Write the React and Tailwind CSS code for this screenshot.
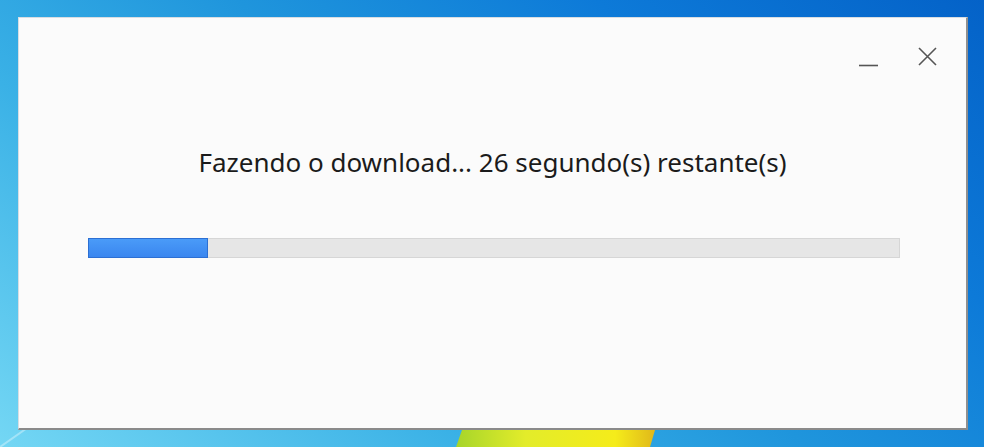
export default function App() {
  return (
    <div className="relative w-[984px] h-[447px] overflow-hidden bg-[linear-gradient(218deg,#0462c8_0%,#0d7ad8_25%,#1f95dc_48%,#3ab1e6_70%,#74d7f4_100%)] pt-[17px] pl-[18px]">
      <svg className="absolute left-0 top-0" width="984" height="447">
        <defs>
          <linearGradient id="yl" x1="0" x2="1" y1="0" y2="0">
            <stop offset="0" stopColor="#a6d52a" />
            <stop offset="0.35" stopColor="#e3ec2a" />
            <stop offset="0.8" stopColor="#f5ec1a" />
            <stop offset="1" stopColor="#e0b81a" />
          </linearGradient>
        </defs>
        <polygon points="462,430 655,430 650,447 456,447" fill="url(#yl)" />
        <line x1="0" y1="447" x2="60" y2="405" stroke="#ffffff" strokeOpacity="0.35" strokeWidth="2" />
      </svg>
      <div className="relative w-[950px] h-[413px] bg-[#fbfbfb] border border-[#d8dde2] border-r-[2px] border-b-[2px] border-r-[#8f8f8f] border-b-[#8a8a8a] flex flex-col">
        <div className="flex justify-end items-start pt-[29px] pr-[29px] gap-[40px] h-[60px]">
          <svg width="19" height="20" viewBox="0 0 19 20">
            <line x1="0" y1="18.5" x2="19" y2="18.5" stroke="#555" strokeWidth="1.6" />
          </svg>
          <svg width="19" height="19" viewBox="0 0 19 19">
            <path d="M1 1L18 18M18 1L1 18" stroke="#555" strokeWidth="1.6" fill="none" />
          </svg>
        </div>
        <div className="mt-[68px] text-center text-[26px] leading-[32px] text-[#1b1b1b] font-['Noto_Sans',sans-serif]">
          Fazendo o download... 26 segundo(s) restante(s)
        </div>
        <div className="mt-[60px] ml-[69px] mr-[66px] h-[20px] bg-[#e6e6e6] border border-[#d6d6d6] flex">
          <div className="w-[120px] bg-[linear-gradient(#4a9bf8,#3a86ef)] border border-[#2c6fd3] -m-px h-[20px]" />
        </div>
      </div>
    </div>
  );
}
